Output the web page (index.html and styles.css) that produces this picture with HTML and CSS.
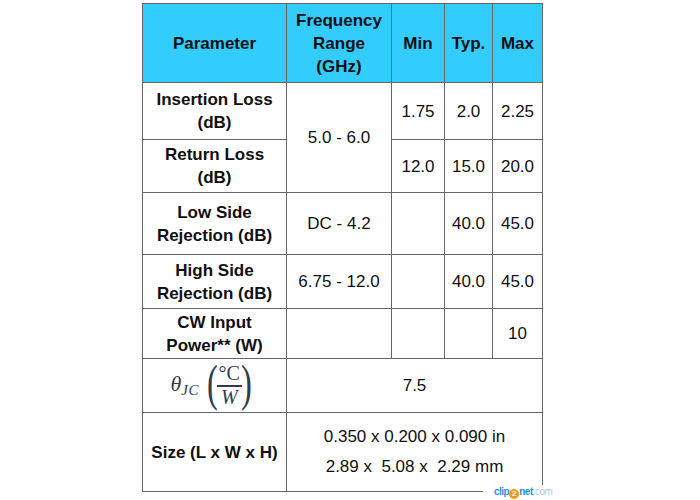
FILE: index.html
```html
<!DOCTYPE html>
<html>
<head>
<meta charset="utf-8">
<link rel="stylesheet" href="styles.css">
</head>
<body>
<div class="page">
  <table class="spec">
    <colgroup>
      <col class="c1"><col class="c2"><col class="c3"><col class="c4"><col class="c5">
    </colgroup>
    <tr class="head r-head">
      <th>Parameter</th>
      <th>Frequency<br>Range<br>(GHz)</th>
      <th>Min</th>
      <th>Typ.</th>
      <th>Max</th>
    </tr>
    <tr class="r-il">
      <td class="param">Insertion Loss<br>(dB)</td>
      <td rowspan="2">5.0 - 6.0</td>
      <td>1.75</td>
      <td>2.0</td>
      <td>2.25</td>
    </tr>
    <tr class="r-rl">
      <td class="param">Return Loss<br>(dB)</td>
      <td>12.0</td>
      <td>15.0</td>
      <td>20.0</td>
    </tr>
    <tr class="r-ls">
      <td class="param">Low Side<br>Rejection (dB)</td>
      <td>DC - 4.2</td>
      <td></td>
      <td>40.0</td>
      <td>45.0</td>
    </tr>
    <tr class="r-hs">
      <td class="param">High Side<br>Rejection (dB)</td>
      <td>6.75 - 12.0</td>
      <td></td>
      <td>40.0</td>
      <td>45.0</td>
    </tr>
    <tr class="r-cw">
      <td class="param">CW Input<br>Power** (W)</td>
      <td></td>
      <td></td>
      <td></td>
      <td>10</td>
    </tr>
    <tr class="r-th">
      <td class="param">
        <span class="math">
          <span class="theta">θ<span class="sub">JC</span></span>
          <span class="paren">(</span>
          <span class="frac"><span class="num">°C</span><span class="den">W</span></span>
          <span class="paren">)</span>
        </span>
      </td>
      <td colspan="4">7.5</td>
    </tr>
    <tr class="r-sz">
      <td class="param">Size (L x W x H)</td>
      <td colspan="4" class="size">0.350 x 0.200 x 0.090 in<br>2.89 x &nbsp;5.08 x &nbsp;2.29 mm</td>
    </tr>
  </table>
  <div class="mark"><span class="blue">clip</span><span class="two">2</span><span class="blue">net</span><span class="com">.com</span></div>
</div>
</body>
</html>
```
FILE: styles.css
```css
html, body {
  margin: 0;
  padding: 0;
  background: #ffffff;
}
.page {
  position: relative;
  padding: 3px 0 0 142px;
  width: 700px;
  height: 500px;
  box-sizing: border-box;
}
.spec {
  border-collapse: collapse;
  table-layout: fixed;
  width: 401px;
  font-family: "Liberation Sans", Arial, sans-serif;
  font-size: 17px;
  line-height: 23px;
  color: #101010;
}
.c1 { width: 144px; }
.c2 { width: 105px; }
.c3 { width: 53px; }
.c4 { width: 48px; }
.c5 { width: 50px; }
.spec th, .spec td {
  border: 1px solid #666666;
  padding: 0;
  text-align: center;
  vertical-align: middle;
}
.spec th {
  background: #33ccff;
  font-weight: bold;
}
.param { font-weight: bold; }
.r-head { height: 79px; }
.r-il { height: 57px; }
.r-rl { height: 53px; }
.r-ls { height: 62px; }
.r-hs { height: 54px; }
.r-cw { height: 50px; }
.r-th { height: 54px; }
.r-sz { height: 79px; }
.size { line-height: 30px; padding-top: 2px; }

.math {
  display: inline-flex;
  align-items: center;
  font-family: "Liberation Serif", "DejaVu Serif", serif;
  font-style: italic;
  font-weight: normal;
  color: #2f3b52;
  margin-right: 8px;
}
.theta {
  font-size: 22px;
  margin-right: 9px;
  position: relative;
  top: -1px;
}
.sub {
  font-size: 15px;
  position: relative;
  top: 4px;
  letter-spacing: 0.5px;
}
.paren {
  font-style: normal;
  font-size: 50px;
  line-height: 46px;
  display: inline-block;
  transform: scaleX(0.65);
  margin: 0 -4px;
  position: relative;
  top: -3px;
}
.frac {
  display: inline-flex;
  flex-direction: column;
  align-items: center;
  font-size: 20px;
  line-height: 19px;
}
.num {
  font-style: normal;
  border-bottom: 2px solid #2f3b52;
  padding: 0 2px 2px 2px;
}
.den {
  padding-top: 1px;
}

.mark {
  position: absolute;
  left: 483px;
  top: 485px;
  width: 70px;
  height: 15px;
  background: #ffffff;
  font-family: "Liberation Sans", Arial, sans-serif;
  font-size: 10px;
  line-height: 14px;
  font-weight: bold;
  padding-left: 11px;
  box-sizing: border-box;
  letter-spacing: -0.5px;
  white-space: nowrap;
}
.blue { color: #2a8fd8; }
.two {
  display: inline-block;
  width: 10px;
  height: 10px;
  border-radius: 50%;
  background: #f39a1e;
  color: #ffffff;
  font-size: 8px;
  line-height: 10px;
  text-align: center;
  letter-spacing: 0;
  vertical-align: -1px;
}
.com { color: #b8c4d0; font-weight: normal; }
```
